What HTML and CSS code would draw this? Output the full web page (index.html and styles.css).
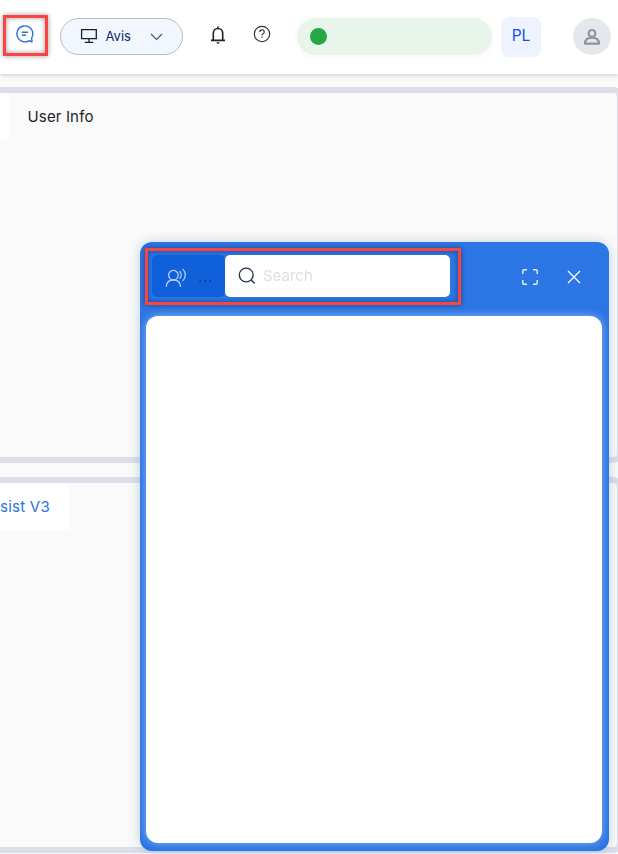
FILE: index.html
```html
<!DOCTYPE html>
<html lang="en">
<head>
<meta charset="utf-8">
<title>Dashboard</title>
<link rel="stylesheet" href="styles.css">
</head>
<body>
<header class="topbar">
  <button class="chat-toggle highlight" aria-label="Chat">
    <svg width="20" height="20" viewBox="0 0 20 20" fill="none" stroke="#2f6fe4" stroke-width="1.4" stroke-linecap="round" stroke-linejoin="round"><path d="M13.800 16.800A8 8 0 1 1 17.800 10c0 1.700-.5 3-1.200 4.200l.5 3.500-3.300-.9"/><path d="M7.300 8.200h5.200M7.300 11.300h3.300"/></svg>
  </button>
  <button class="workspace">
    <svg width="18" height="16" viewBox="0 0 18 16" fill="none" stroke="#1d2025" stroke-width="1.300"><path d="M1.600 1.700h14.700v9H1.600zM9 10.700v3.600M4.800 14.400h8.500"/></svg>
    <span class="workspace-name">Avis</span>
    <svg class="chevron" width="13" height="8" viewBox="0 0 13 8" fill="none" stroke="#4e5560" stroke-width="1.100"><path d="M1 1l5.500 5.500L12 1"/></svg>
  </button>
  <svg class="bell" width="16" height="18" viewBox="0 0 16 18" fill="none" stroke="#1d2126" stroke-width="1.600"><path d="M3.300 14.300V7.200a4.700 4.700 0 0 1 9.400 0v7.100M1 14.400h14M8 .5v2"/><path d="M6.500 16.200h3a1.500 1.500 0 0 1-3 0z" fill="#1d2126" stroke="none"/></svg>
  <svg class="help" width="18" height="18" viewBox="0 0 18 18" fill="none" stroke="#30343a" stroke-width="1.150"><circle cx="9" cy="9" r="7.700"/><path d="M6.800 7.100c0-1.500 1-2.200 2.200-2.200s2.200.8 2.200 2c0 1.800-2.200 1.700-2.200 3.500"/><path d="M9 11.800v1.300"/></svg>
  <div class="status"><span class="status-dot"></span></div>
  <div class="language">PL</div>
  <div class="avatar">
    <svg width="18" height="18" viewBox="0 0 18 18" fill="none" stroke="#89949d" stroke-width="2.100"><circle cx="9" cy="5.400" r="3.400"/><path d="M2 15.600c0-4 2.600-5.800 7-5.800s7 1.800 7 5.800z" stroke-linejoin="round"/></svg>
  </div>
</header>
<main class="content">
  <section class="card">
    <div class="tabs"><span class="tab active tab-clipped"></span><span class="tab">User Info</span></div>
  </section>
  <section class="card">
    <div class="tabs"><span class="tab active tab-assist">sist V3</span></div>
  </section>
</main>
<aside class="chat-panel">
  <div class="chat-head">
    <div class="search-group highlight">
      <button class="voice">
        <svg width="22" height="20" viewBox="0 0 22 20" fill="none" stroke="#b9d0f7" stroke-width="1.300" stroke-linecap="round"><circle cx="8.400" cy="7.200" r="4.800"/><path d="M1.300 18.300c.3-3.800 3.100-6.300 7.100-6.300s6.800 2.500 7.100 6.300M14.900 3.500c1.600 1.900 1.600 4.900 0 6.800M17.900 1.400c3.200 3 3.200 8 0 11.200"/></svg>
        <span class="voice-more">...</span>
      </button>
      <label class="search">
        <svg width="18" height="18" viewBox="0 0 18 18" fill="none" stroke="#26364c" stroke-width="1.400"><circle cx="8.200" cy="8" r="6.900"/><path d="M13 12.800l3.700 3.700"/></svg>
        <input type="text" placeholder="Search">
      </label>
    </div>
    <div class="panel-actions">
      <svg width="16" height="16" viewBox="0 0 16 16" fill="none" stroke="#e8f0fd" stroke-width="1.400"><path d="M.8 5V2Q.8.8 2 .8h3M11 .8h3q1.200 0 1.200 1.200v3M15.200 11v3q0 1.200-1.200 1.200h-3M5 15.200H2Q.8 15.200.8 14v-3"/></svg>
      <svg width="14" height="14" viewBox="0 0 14 14" fill="none" stroke="#fff" stroke-width="1.250"><path d="M1 1l12 12M13 1L1 13"/></svg>
    </div>
  </div>
  <div class="chat-body"></div>
</aside>
</body>
</html>
```
FILE: styles.css
```css
* { box-sizing: border-box; }

body {
  margin: 0;
  height: 854px;
  overflow: hidden;
  background: #fafafa;
  color: #212529;
  font-family: Inter, "Liberation Sans", sans-serif;
}

button {
  border: 0;
  padding: 0;
  background: none;
  font: inherit;
}

svg { display: block; flex: none; }

.topbar {
  display: flex;
  align-items: center;
  height: 74px;
  padding: 0 7px 2px 3px;
  background: #fff;
  box-shadow: 0 2px 4px rgba(0, 0, 0, .14);
}

.highlight {
  border: 3px solid #fa4343;
  box-shadow: 0 0 5px rgba(0, 0, 0, .4), inset 0 0 5px rgba(0, 0, 0, .4);
}

.chat-toggle {
  display: flex;
  justify-content: center;
  width: 45px;
  height: 41px;
  padding: 6px 2px 0 0;
  margin-top: -1px;
}

.workspace {
  display: flex;
  align-items: center;
  width: 123px;
  height: 37px;
  margin: 1px 0 0 12px;
  padding: 0 19px 0 18.5px;
  border: 1px solid #b9bdc2;
  border-radius: 19px;
  background: #f2f7ff;
  color: #12296b;
  font-size: 13px;
}

.workspace svg:first-child { margin-top: -1px; }
.workspace-name { margin: -1px 0 0 8px; }
.chevron { margin-left: auto; }
.bell { margin: -3px 0 0 26.5px; }
.help { margin: -4px 0 0 27px; }

.status {
  display: flex;
  align-items: center;
  width: 195px;
  height: 37px;
  margin: 1px 0 0 26.5px;
  padding-left: 13px;
  border-radius: 19px;
  background: #e8f5eb;
  box-shadow: 0 2px 8px rgba(0, 0, 0, .035);
}

.status-dot {
  width: 17px;
  height: 17px;
  border-radius: 50%;
  background: #28a745;
}

.language {
  width: 40px;
  height: 40px;
  margin: 2px 0 0 9px;
  border-radius: 8px;
  background: #eff3ff;
  color: #0b53e8;
  font-size: 15.5px;
  line-height: 37px;
  text-align: center;
}

.avatar {
  display: grid;
  place-items: center;
  width: 38px;
  height: 37px;
  margin: 1px 0 0 32px;
  border-radius: 50%;
  background: #e4e7eb;
}

.content {
  display: grid;
  gap: 14px;
  padding-top: 13px;
}

.card {
  width: 643px;
  height: 376px;
  margin-left: -20px;
  padding-left: 14px;
  border: 6px solid #dcdfea;
  border-radius: 10px;
}

.tabs { display: flex; }

.tab {
  height: 47px;
  padding: 0 18.5px;
  font-size: 15px;
  line-height: 47px;
  letter-spacing: .15px;
}

.active { background: #fff; color: #2872e3; }
.tab-clipped { width: 9px; padding: 0; }
.tab-assist { width: 69px; padding: 0; letter-spacing: .25px; }

.chat-panel {
  position: fixed;
  left: 140px;
  top: 242px;
  width: 469px;
  height: 609px;
  padding: 6px 7px 8px 6px;
  border-radius: 12px;
  background: #2b75e4;
  box-shadow: 0 0 12px rgba(25, 90, 125, .26);
}

.chat-head {
  display: flex;
  justify-content: space-between;
  height: 68px;
  padding-right: 21px;
}

.search-group {
  display: flex;
  width: 316px;
  height: 57px;
  margin-left: -1px;
  padding: 4px 8px 5px 4px;
}

.voice {
  display: flex;
  align-items: center;
  width: 73px;
  height: 42px;
  padding: 4px 0 0 13px;
  border-radius: 5px;
  background: #1060dc;
  color: #173e7d;
}

.voice-more {
  margin: -4px 0 0 11px;
  font-size: 16px;
  letter-spacing: .4px;
}

.search {
  display: flex;
  align-items: center;
  flex: 1;
  height: 42px;
  padding-left: 13px;
  border-radius: 5px;
  background: #fff;
}

.search input {
  width: 160px;
  margin: -2px 0 0 7px;
  padding: 0;
  border: 0;
  outline: 0;
  background: transparent;
  font: 15px Inter, "Liberation Sans", sans-serif;
}

.search input::placeholder { color: #dcdfe3; opacity: 1; }

.panel-actions {
  display: flex;
  align-items: center;
  gap: 29px;
  height: 58px;
}

.chat-body {
  height: 527px;
  border-radius: 12px;
  background: #fff;
  box-shadow: 0 0 8px rgba(190, 218, 255, .65);
}
```
